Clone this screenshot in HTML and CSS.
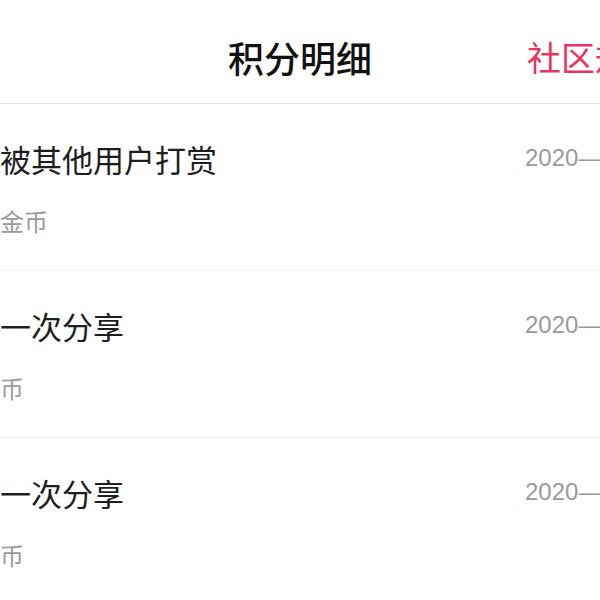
FILE: index.html
```html
<!DOCTYPE html>
<html lang="zh-CN">
<head>
<meta charset="utf-8">
<title>积分明细</title>
<link rel="stylesheet" href="styles.css">
</head>
<body>
<div class="page">
  <header class="nav">
    <div class="nav-side"></div>
    <h1 class="nav-title">积分明细</h1>
    <div class="nav-side nav-side--right"><span class="nav-action">社区规则</span></div>
  </header>
  <ul class="list">
    <li class="item">
      <div class="item-main">
        <div class="item-title">被其他用户打赏</div>
        <div class="item-sub">金币</div>
      </div>
      <div class="item-date">2020—06—18</div>
    </li>
    <li class="item">
      <div class="item-main">
        <div class="item-title">一次分享</div>
        <div class="item-sub item-sub--cut">金币</div>
      </div>
      <div class="item-date">2020—06—17</div>
    </li>
    <li class="item">
      <div class="item-main">
        <div class="item-title">一次分享</div>
        <div class="item-sub item-sub--cut">金币</div>
      </div>
      <div class="item-date">2020—06—16</div>
    </li>
  </ul>
</div>
</body>
</html>
```

FILE: styles.css
```css
html, body {
  margin: 0;
  padding: 0;
  background: #ffffff;
  overflow: hidden;
}
body {
  width: 600px;
  height: 600px;
  font-family: "Noto Sans CJK SC", "Noto Sans", sans-serif;
}
.page {
  width: 600px;
}
.nav {
  display: grid;
  grid-template-columns: minmax(0, 1fr) auto minmax(0, 1fr);
  align-items: center;
  height: 93px;
  padding-top: 10px;
  border-bottom: 1px solid #e6e6e6;
}
.nav-title {
  margin: 0;
  font-size: 36px;
  line-height: 44px;
  font-weight: 500;
  color: #111111;
  white-space: nowrap;
}
.nav-side--right {
  white-space: nowrap;
}
.nav-action {
  display: inline-block;
  margin-left: 155px;
  font-size: 34px;
  line-height: 44px;
  color: #e8355d;
}
.list {
  list-style: none;
  margin: 0;
  padding: 0;
}
.item {
  display: grid;
  grid-template-columns: 525px auto;
  height: 131px;
  padding-top: 35px;
  border-bottom: 1px solid #efefef;
  white-space: nowrap;
}
.item-main {
  display: flex;
  flex-direction: column;
  gap: 26px;
}
.item-title {
  font-size: 31px;
  line-height: 40px;
  color: #1e1e1e;
}
.item-sub {
  font-size: 24px;
  line-height: 32px;
  color: #9b9b9b;
}
.item-sub--cut {
  margin-left: -24px;
}
.item-date {
  font-family: "Liberation Sans", "Noto Sans CJK SC", sans-serif;
  font-size: 24px;
  line-height: 40px;
  color: #9a9a9a;
  margin-top: -1px;
}
```
